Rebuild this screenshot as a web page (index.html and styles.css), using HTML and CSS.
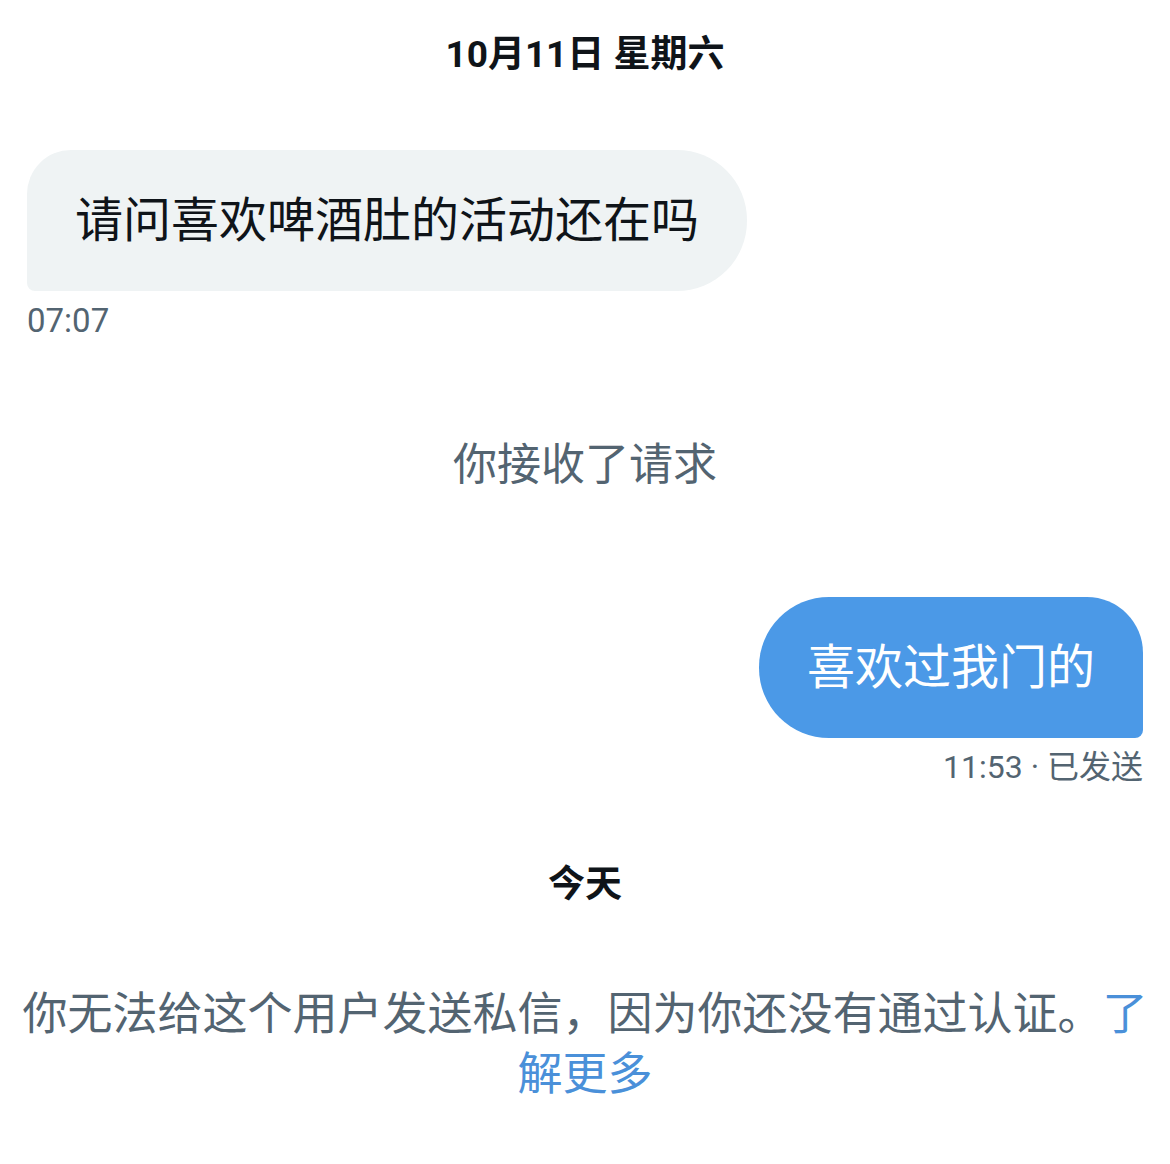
FILE: index.html
```html
<!DOCTYPE html>
<html>
<head>
    <meta charset="UTF-8">
    <title>私信</title>
    <link rel="stylesheet" href="styles.css">
</head>
<body>
    <div class="chat">
        <div class="day">10月11日 星期六</div>

        <div class="msg in">
            <div class="bubble">请问喜欢啤酒肚的活动还在吗</div>
            <div class="meta">07:07</div>
        </div>

        <div class="system">你接收了请求</div>

        <div class="msg out">
            <div class="bubble">喜欢过我门的</div>
            <div class="meta">11:53 · 已发送</div>
        </div>

        <div class="day today">今天</div>

        <p class="notice">你无法给这个用户发送私信，因为你还没有通过认证。<a href="#">了解更多</a></p>
    </div>
</body>
</html>
```

FILE: styles.css
```css
body {
    margin: 0;
    background: #fff;
    font-family: Roboto, "Noto Sans CJK SC", sans-serif;
    color: #0f1419;
}

.chat {
    display: flex;
    flex-direction: column;
    padding: 0 27px;
}

.day {
    margin-top: 30px;
    font-size: 37px;
    line-height: 50px;
    font-weight: bold;
    text-align: center;
}

.msg {
    display: flex;
    flex-direction: column;
}

.msg.in {
    margin-top: 70px;
    align-items: flex-start;
}

.msg.out {
    margin-top: 102px;
    align-items: flex-end;
}

.bubble {
    font-size: 48px;
    line-height: 61px;
    padding: 40px 48px;
}

.in .bubble {
    background: #eff3f4;
    color: #0f1419;
    border-radius: 44px 70px 70px 8px;
}

.out .bubble {
    background: #4b99e7;
    color: #fff;
    border-radius: 70px 56px 8px 70px;
}

.meta {
    margin-top: 10px;
    font-size: 33px;
    line-height: 40px;
    color: #536471;
}

.out .meta {
    margin-top: 9px;
    font-size: 32px;
}

.system {
    margin-top: 94px;
    font-size: 44px;
    line-height: 60px;
    text-align: center;
    color: #536471;
}

.today {
    margin-top: 73px;
}

.notice {
    margin: 75px -10px 0;
    font-size: 45px;
    line-height: 60px;
    text-align: center;
    color: #536471;
}

.notice a {
    color: #4a90d9;
    text-decoration: none;
}
```
